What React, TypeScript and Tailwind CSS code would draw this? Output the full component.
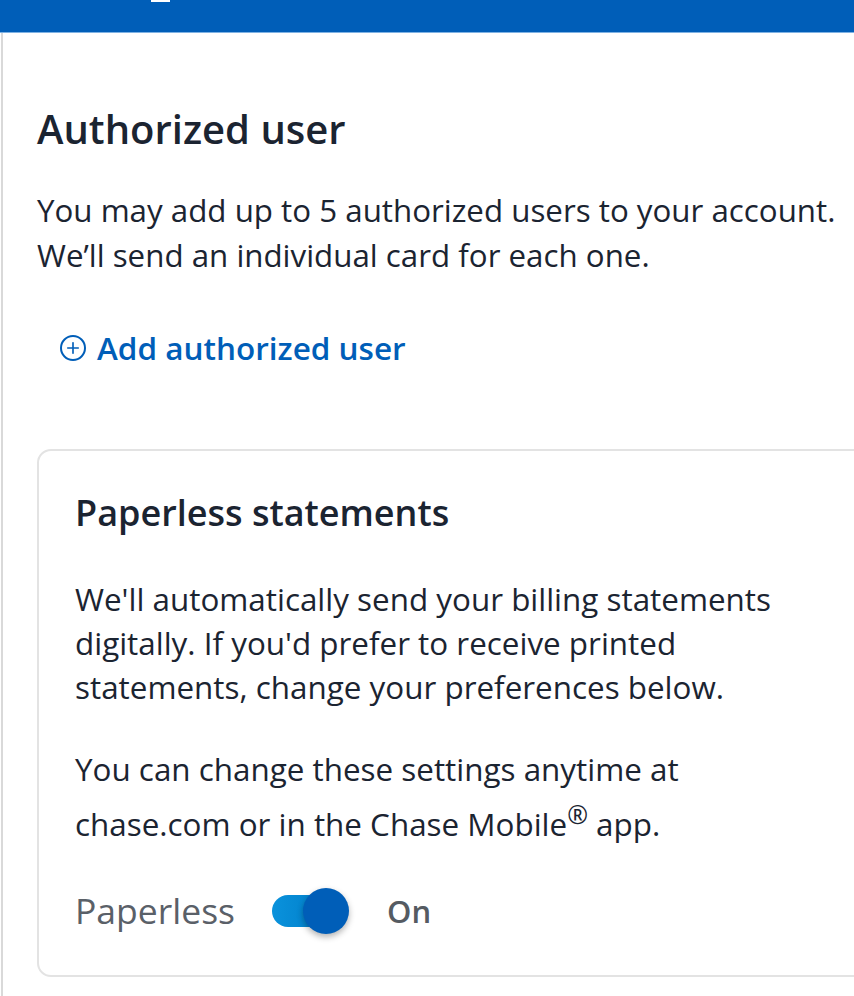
import { Plus } from 'lucide-react';

function Toggle() {
    return (
        <div className="relative flex h-[46px] w-[78px] items-center">
            <div className="h-[32px] w-[68px] rounded-full bg-gradient-to-r from-[#0a92dc] to-[#0079c4]" />
            <div className="absolute left-[31px] top-0 h-[46px] w-[46px] rounded-full bg-[#005eb8] shadow-[0_3px_6px_rgba(0,0,0,0.3)]" />
        </div>
    );
}

export default function App() {
    return (
        <div
            className="relative flex h-[996px] w-full flex-col overflow-hidden bg-white"
            style={{ fontFamily: '"Open Sans", "Noto Sans", sans-serif' }}
        >
            {/* Top bar */}
            <div className="h-[33px] shrink-0 border-b border-[#7fb2e3] bg-[#005eb8]" />
            <div className="absolute left-[151px] top-0 h-[2px] w-[19px] bg-white" />

            <div className="ml-[1px] flex-1 border-l-2 border-[#d9d9d9] pl-[34px] pt-[72px]">
                {/* Authorized user */}
                <h2 className="whitespace-nowrap text-[40px] font-semibold leading-[48px] text-[#1b2431]">
                    Authorized user
                </h2>
                <p className="mt-[35px] whitespace-nowrap text-[31.3px] leading-[45px] text-[#1b2431]">
                    You may add up to 5 authorized users to your account.
                    <br />
                    We’ll send an individual card for each one.
                </p>
                <button className="mt-[50px] flex h-[40px] items-center gap-[11px] whitespace-nowrap pl-[23px] text-[31.5px] font-semibold text-[#005eb8]">
                    <span className="flex h-[26px] w-[26px] items-center justify-center rounded-full border-2 border-[#005eb8]">
                        <Plus className="h-[18px] w-[18px]" strokeWidth={2.2} />
                    </span>
                    Add authorized user
                </button>

                {/* Paperless card */}
                <div className="mr-[-60px] mt-[81px] rounded-[14px] border-2 border-[#e3e3e3] pb-[39px] pl-[36px] pt-[40px]">
                    <h3 className="whitespace-nowrap text-[36px] font-semibold leading-[44px] text-[#1b2431]">
                        Paperless statements
                    </h3>
                    <p className="mt-[42px] whitespace-nowrap text-[31.4px] leading-[44px] text-[#1b2431]">
                        We'll automatically send your billing statements
                        <br />
                        digitally. If you'd prefer to receive printed
                        <br />
                        statements, change your preferences below.
                    </p>
                    <p className="mt-[32px] whitespace-nowrap text-[31.4px] leading-[55px] text-[#1b2431]">
                        You can change these settings anytime at
                        <br />
                        chase.com or in the Chase Mobile
                        <sup className="text-[25px] leading-none">®</sup> app.
                    </p>
                    <div className="mt-[35px] flex h-[50px] items-center">
                        <span className="text-[35.5px] text-[#5a6068]">Paperless</span>
                        <div className="ml-[37px]">
                            <Toggle />
                        </div>
                        <span className="ml-[37px] text-[31px] font-semibold text-[#555b62]">On</span>
                    </div>
                </div>
            </div>
        </div>
    );
}
